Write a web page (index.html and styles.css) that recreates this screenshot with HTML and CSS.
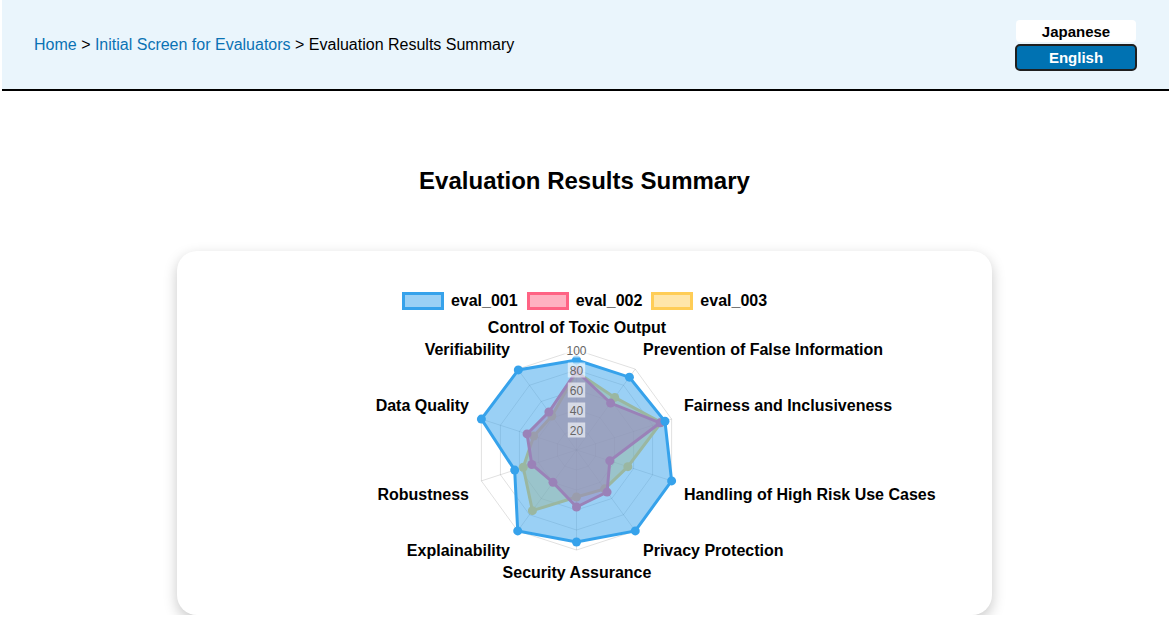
FILE: index.html
```html
<!DOCTYPE html>
<html lang="en">
<head>
<meta charset="utf-8">
<title>Evaluation Results Summary</title>
<link rel="stylesheet" href="styles.css">
</head>
<body>
<header class="topbar">
  <nav class="crumbs"><a href="#">Home</a> &gt; <a href="#">Initial Screen for Evaluators</a> &gt; <span>Evaluation Results Summary</span></nav>
  <div class="lang">
    <button class="lang-btn">Japanese</button>
    <button class="lang-btn active">English</button>
  </div>
</header>
<main>
  <h1 class="title">Evaluation Results Summary</h1>
  <section class="card">
    <ul class="legend">
      <li class="legend-item"><span class="swatch blue"></span>eval_001</li>
      <li class="legend-item"><span class="swatch pink"></span>eval_002</li>
      <li class="legend-item"><span class="swatch yellow"></span>eval_003</li>
    </ul>
    <svg class="radar" width="815" height="305" viewBox="0 0 815 305">
      <g transform="translate(399.5,140)">
        <g class="grid">
          <polygon points="0,-100 58.78,-80.9 95.11,-30.9 95.11,30.9 58.78,80.9 0,100 -58.78,80.9 -95.11,30.9 -95.11,-30.9 -58.78,-80.9"/>
          <polygon points="0,-80 47.02,-64.72 76.09,-24.72 76.09,24.72 47.02,64.72 0,80 -47.02,64.72 -76.09,24.72 -76.09,-24.72 -47.02,-64.72"/>
          <polygon points="0,-60 35.27,-48.54 57.07,-18.54 57.07,18.54 35.27,48.54 0,60 -35.27,48.54 -57.07,18.54 -57.07,-18.54 -35.27,-48.54"/>
          <polygon points="0,-40 23.51,-32.36 38.04,-12.36 38.04,12.36 23.51,32.36 0,40 -23.51,32.36 -38.04,12.36 -38.04,-12.36 -23.51,-32.36"/>
          <polygon points="0,-20 11.76,-16.18 19.02,-6.18 19.02,6.18 11.76,16.18 0,20 -11.76,16.18 -19.02,6.18 -19.02,-6.18 -11.76,-16.18"/>
          <line x1="0" y1="0" x2="0" y2="-100"/>
          <line x1="0" y1="0" x2="58.78" y2="-80.9"/>
          <line x1="0" y1="0" x2="95.11" y2="-30.9"/>
          <line x1="0" y1="0" x2="95.11" y2="30.9"/>
          <line x1="0" y1="0" x2="58.78" y2="80.9"/>
          <line x1="0" y1="0" x2="0" y2="100"/>
          <line x1="0" y1="0" x2="-58.78" y2="80.9"/>
          <line x1="0" y1="0" x2="-95.11" y2="30.9"/>
          <line x1="0" y1="0" x2="-95.11" y2="-30.9"/>
          <line x1="0" y1="0" x2="-58.78" y2="-80.9"/>
        </g>
        <g class="ds yellow">
          <polygon points="0,-78 38.21,-52.59 84.65,-27.5 51.36,16.69 28.21,38.83 0,47 -44.09,60.68 -53.26,17.3 -42.8,-13.91 -24.69,-33.98"/>
          <circle cx="0" cy="-78" r="4.5"/><circle cx="38.21" cy="-52.59" r="4.5"/><circle cx="84.65" cy="-27.5" r="4.5"/><circle cx="51.36" cy="16.69" r="4.5"/><circle cx="28.21" cy="38.83" r="4.5"/><circle cx="0" cy="47" r="4.5"/><circle cx="-44.09" cy="60.68" r="4.5"/><circle cx="-53.26" cy="17.3" r="4.5"/><circle cx="-42.8" cy="-13.91" r="4.5"/><circle cx="-24.69" cy="-33.98" r="4.5"/>
        </g>
        <g class="ds pink">
          <polygon points="0,-79 34.09,-46.92 83.7,-27.19 33.29,10.82 30.57,42.07 0,57 -23.51,32.36 -44.7,14.52 -49.46,-16.07 -27.63,-38.02"/>
          <circle cx="0" cy="-79" r="4.5"/><circle cx="34.09" cy="-46.92" r="4.5"/><circle cx="83.7" cy="-27.19" r="4.5"/><circle cx="33.29" cy="10.82" r="4.5"/><circle cx="30.57" cy="42.07" r="4.5"/><circle cx="0" cy="57" r="4.5"/><circle cx="-23.51" cy="32.36" r="4.5"/><circle cx="-44.7" cy="14.52" r="4.5"/><circle cx="-49.46" cy="-16.07" r="4.5"/><circle cx="-27.63" cy="-38.02" r="4.5"/>
        </g>
        <g class="ds blue">
          <polygon points="0,-90 52.9,-72.81 88.45,-28.74 95.11,30.9 58.78,80.9 0,92 -58.78,80.9 -61.82,20.09 -95.11,-30.9 -58.19,-80.09"/>
          <circle cx="0" cy="-90" r="4.5"/><circle cx="52.9" cy="-72.81" r="4.5"/><circle cx="88.45" cy="-28.74" r="4.5"/><circle cx="95.11" cy="30.9" r="4.5"/><circle cx="58.78" cy="80.9" r="4.5"/><circle cx="0" cy="92" r="4.5"/><circle cx="-58.78" cy="80.9" r="4.5"/><circle cx="-61.82" cy="20.09" r="4.5"/><circle cx="-95.11" cy="-30.9" r="4.5"/><circle cx="-58.19" cy="-80.09" r="4.5"/>
        </g>
        <g class="ticks">
          <rect x="-8.7" y="-27.5" width="17.4" height="15"/><text x="0" y="-15.4">20</text>
          <rect x="-8.7" y="-47.5" width="17.4" height="15"/><text x="0" y="-35.4">40</text>
          <rect x="-8.7" y="-67.5" width="17.4" height="15"/><text x="0" y="-55.4">60</text>
          <rect x="-8.7" y="-87.5" width="17.4" height="15"/><text x="0" y="-75.4">80</text>
          <rect x="-12" y="-107.5" width="24" height="15"/><text x="0" y="-95.4">100</text>
        </g>
      </g>
      <g class="plabels">
        <text x="400" y="23" text-anchor="middle">Control of Toxic Output</text>
        <text x="466" y="45">Prevention of False Information</text>
        <text x="507" y="101">Fairness and Inclusiveness</text>
        <text x="507" y="190">Handling of High Risk Use Cases</text>
        <text x="466" y="246">Privacy Protection</text>
        <text x="400" y="268" text-anchor="middle">Security Assurance</text>
        <text x="333" y="246" text-anchor="end">Explainability</text>
        <text x="292" y="190" text-anchor="end">Robustness</text>
        <text x="292" y="101" text-anchor="end">Data Quality</text>
        <text x="333" y="45" text-anchor="end">Verifiability</text>
      </g>
    </svg>
  </section>
</main>
</body>
</html>
```

FILE: styles.css
```css
* {
  box-sizing: border-box;
}

body {
  margin: 0;
  font-family: "Liberation Sans", Arial, sans-serif;
  color: #000;
  background: #fff;
}

.topbar {
  margin-left: 2px;
  height: 91px;
  background: #eaf5fc;
  border-bottom: 2px solid #000;
  display: flex;
  align-items: center;
  justify-content: space-between;
  padding: 0 32px;
}

.crumbs {
  font-size: 16px;
  line-height: 20px;
}

.crumbs a {
  color: #0a72b4;
  text-decoration: none;
}

.lang {
  display: flex;
  flex-direction: column;
  align-items: center;
  gap: 2px;
  margin-top: 2px;
}

.lang-btn {
  font: bold 15px "Liberation Sans", Arial, sans-serif;
  border: none;
  padding: 0;
  margin: 0;
  border-radius: 4px;
  background: #fff;
  color: #000;
  width: 120px;
  height: 22px;
}

.lang-btn.active {
  width: 122px;
  height: 27px;
  background: #0072b2;
  color: #fff;
  border: 2px solid #1f1f1f;
  border-radius: 5px;
}

.title {
  margin: 76px 0 56px;
  text-align: center;
  font-size: 24px;
  line-height: 28px;
  font-weight: bold;
}

.card {
  width: 815px;
  height: 364px;
  margin: 0 auto;
  background: #fff;
  border-radius: 20px;
  box-shadow: 0 5px 14px rgba(0, 0, 0, 0.22);
  padding-top: 41px;
}

.legend {
  display: flex;
  justify-content: center;
  gap: 9px;
  margin: 0;
  padding: 0;
  list-style: none;
  height: 18px;
}

.legend-item {
  display: flex;
  align-items: center;
  gap: 7px;
  font-weight: bold;
  font-size: 16px;
  line-height: 18px;
}

.swatch {
  width: 42px;
  height: 18px;
  border: 3px solid;
}

.swatch.blue {
  border-color: rgb(54, 162, 235);
  background: rgba(54, 162, 235, 0.5);
}

.swatch.pink {
  border-color: rgb(255, 99, 132);
  background: rgba(255, 99, 132, 0.5);
}

.swatch.yellow {
  border-color: rgb(255, 205, 86);
  background: rgba(255, 205, 86, 0.5);
}

.radar {
  display: block;
}

.radar text {
  font-family: "Liberation Sans", Arial, sans-serif;
}

.grid polygon,
.grid line {
  fill: none;
  stroke: rgba(0, 0, 0, 0.12);
  stroke-width: 1;
}

.ds polygon {
  stroke-width: 3;
  stroke-linejoin: miter;
}

.ds.blue polygon {
  fill: rgba(54, 162, 235, 0.5);
  stroke: rgb(54, 162, 235);
}

.ds.blue circle {
  fill: rgb(54, 162, 235);
}

.ds.pink polygon {
  fill: rgba(255, 99, 132, 0.5);
  stroke: rgb(255, 99, 132);
}

.ds.pink circle {
  fill: rgb(255, 99, 132);
}

.ds.yellow polygon {
  fill: rgba(255, 205, 86, 0.5);
  stroke: rgb(255, 205, 86);
}

.ds.yellow circle {
  fill: rgb(255, 205, 86);
}

.ticks rect {
  fill: rgba(255, 255, 255, 0.6);
}

.ticks text {
  font-size: 12px;
  fill: #666;
  text-anchor: middle;
}

.plabels text {
  font-size: 16px;
  font-weight: bold;
  fill: #000;
}
```
